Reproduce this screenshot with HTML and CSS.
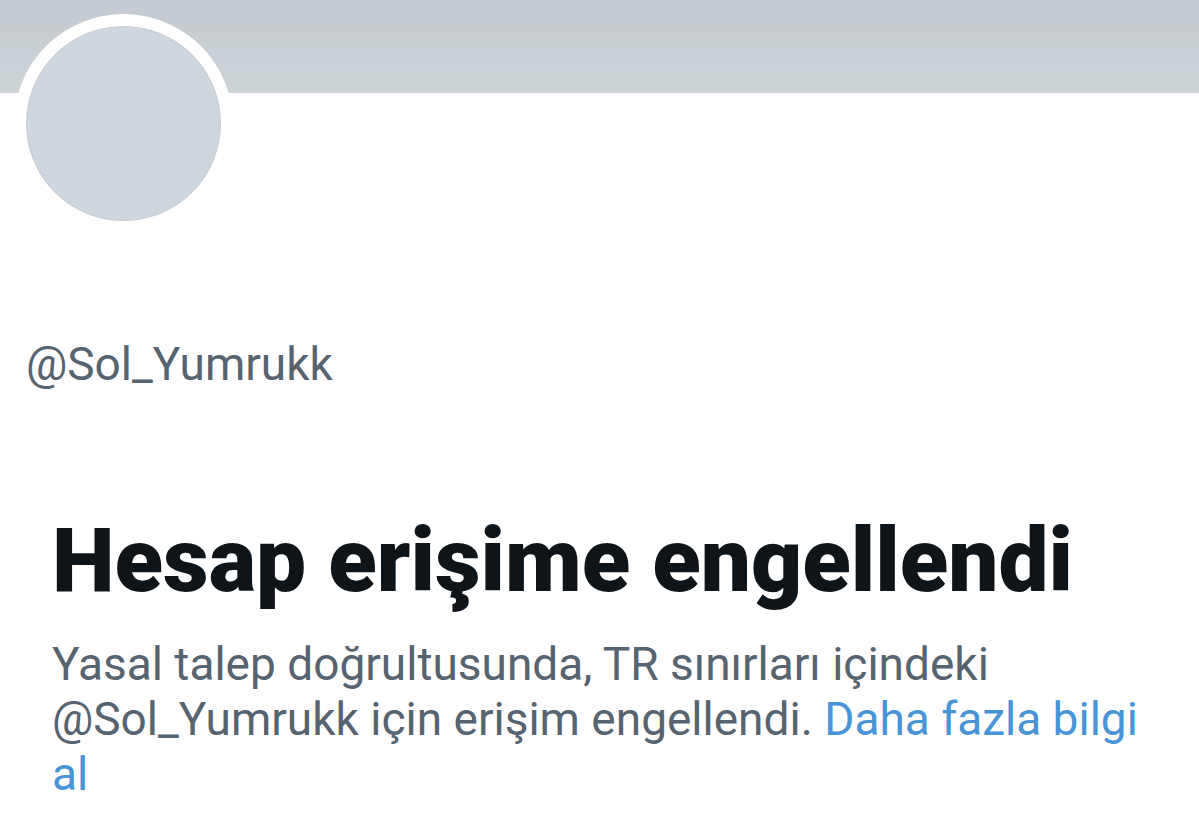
FILE: index.html
```html
<!DOCTYPE html>
<html lang="tr">
<head>
  <meta charset="UTF-8">
  <meta name="viewport" content="width=device-width, initial-scale=1.0">
  <title>@Sol_Yumrukk</title>
  <link rel="stylesheet" href="styles.css">
</head>
<body>
  <header class="banner"></header>
  <main>
    <section class="profile">
      <div class="avatar"></div>
      <p class="handle">@Sol_Yumrukk</p>
    </section>
    <section class="notice">
      <h1>Hesap erişime engellendi</h1>
      <p>Yasal talep doğrultusunda, TR sınırları içindeki @Sol_Yumrukk için erişim engellendi. <a href="#">Daha fazla bilgi al</a></p>
    </section>
  </main>
</body>
</html>
```

FILE: styles.css
```css
* {
  box-sizing: border-box;
}

body {
  margin: 0;
  background-color: #fff;
  color: #566370;
  font-family: Roboto, "Liberation Sans", sans-serif;
  font-size: 46px;
  line-height: 55px;
}

h1, p {
  margin: 0;
}

.banner {
  height: 93px;
  background: linear-gradient(#c3cad2, #c7cdd0 40%, #c9d1d7 60%, #cdd4d6);
}

.profile {
  padding: 0 14px;
}

/* Avatar overlaps the bottom of the banner */
.avatar {
  width: 219px;
  height: 219px;
  margin-top: -79px;
  border: 12px solid #fff;
  border-radius: 50%;
  background-color: #cfd7de;
  box-shadow: inset 0 0 0 1px #c5ccd3;
}

.handle {
  margin-top: 104px;
  padding-left: 12px;
}

.notice {
  padding: 117px 52px 0;
}

h1 {
  margin-bottom: 24px;
  color: #0f1419;
  font-size: 89px;
  font-weight: 900;
  line-height: 104px;
}

a {
  color: #4794d7;
  text-decoration: none;
}
```
